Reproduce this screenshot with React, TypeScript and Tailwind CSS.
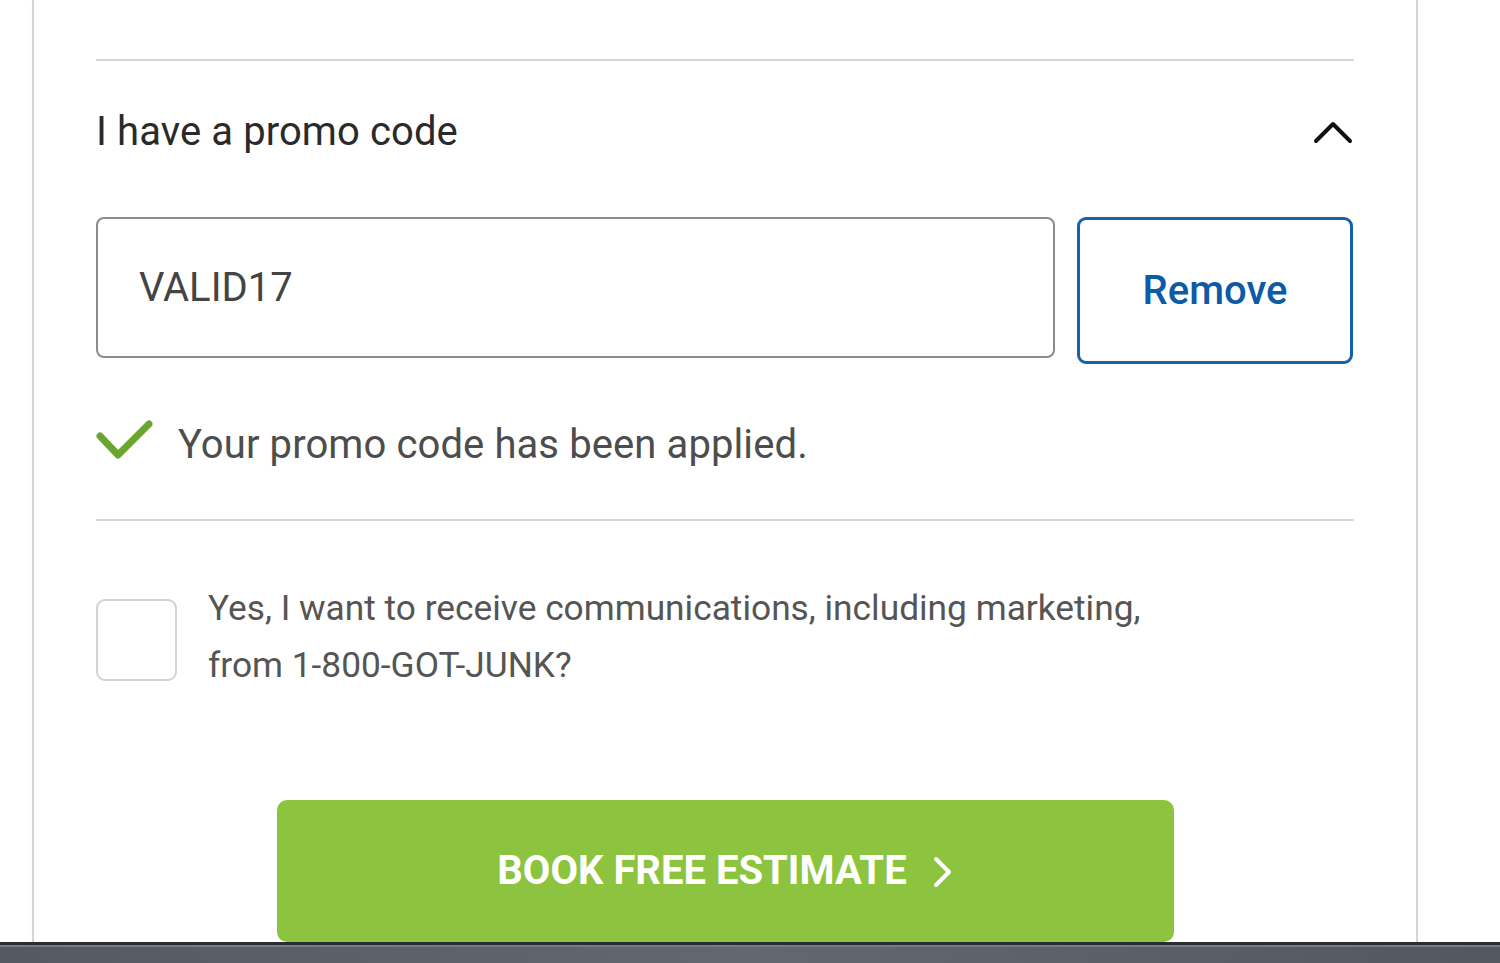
import React from "react";

export default function App() {
  return (
    <div
      className="w-[1500px] h-[963px] bg-white flex flex-col overflow-hidden"
      style={{ fontFamily: "Roboto, 'Liberation Sans', sans-serif" }}
    >
      <div className="flex-1 flex min-h-0">
        <div className="w-[32px] shrink-0 bg-white" />
        <div className="w-[1386px] shrink-0 border-x-2 border-[#d4d4d4] bg-white px-[62px] pt-[59px] shadow-[3px_0_8px_rgba(0,0,0,0.05)] overflow-hidden">
          <div className="border-t-2 border-[#d6d6d6]" />
          <div className="h-[142px] flex items-center justify-between">
            <span className="text-[40px] leading-none text-[#2a2a2a] tracking-[0.1px]">I have a promo code</span>
            <svg width="40" height="24" viewBox="0 0 40 24" className="mr-[1px]" fill="none">
              <path d="M3 21 L20 4 L37 21" stroke="#111" strokeWidth="4" strokeLinecap="round" strokeLinejoin="round" />
            </svg>
          </div>
          <div className="mt-[14px] flex items-start gap-[22px]">
            <div className="w-[959px] h-[141px] rounded-[8px] border-2 border-[#8c8c8c] flex items-center pl-[41px]">
              <span className="text-[40px] leading-none text-[#444444]">VALID17</span>
            </div>
            <button className="w-[276px] h-[147px] rounded-[9px] border-[3px] border-[#1760ad] flex items-center justify-center bg-white">
              <span className="text-[40px] leading-none font-medium text-[#0d5aa7]">Remove</span>
            </button>
          </div>
          <div className="mt-[51px] h-[60px] flex items-center">
            <svg width="58" height="46" viewBox="0 0 58 46" className="shrink-0 -mt-[8px]" fill="none">
              <path d="M4 18 L22 37 L53 6" stroke="#6aa530" strokeWidth="7" strokeLinecap="round" strokeLinejoin="round" />
            </svg>
            <span className="ml-[24px] text-[40px] leading-none text-[#4d4d4d] tracking-[0.1px]">Your promo code has been applied.</span>
          </div>
          <div className="mt-[44px] border-t-2 border-[#d6d6d6]" />
          <div className="mt-[59px] flex items-start">
            <div className="mt-[19px] w-[81px] h-[82px] shrink-0 rounded-[9px] border-2 border-[#d2d2d2] bg-white" />
            <p className="ml-[31px] text-[35.3px] leading-[57px] text-[#555555]">
              Yes, I want to receive communications, including marketing,
              <br />
              from 1-800-GOT-JUNK?
            </p>
          </div>
          <div className="mt-[106px] flex justify-center">
            <button className="w-[897px] h-[142px] rounded-[10px] bg-[#8dc43f] flex items-center justify-center">
              <span className="text-[40px] leading-none font-bold text-white">BOOK FREE ESTIMATE</span>
              <svg width="22" height="32" viewBox="0 0 22 32" className="ml-[24px] mt-[2px]" fill="none">
                <path d="M5 3 L18 16 L5 29" stroke="#fff" strokeWidth="4" strokeLinecap="round" strokeLinejoin="round" />
              </svg>
            </button>
          </div>
        </div>
        <div className="flex-1 bg-white" />
      </div>
      <div className="h-[21px] shrink-0 border-t-[3px] border-[#2a2d31] bg-gradient-to-r from-[#545a61] via-[#626870] to-[#525860]">
        <div className="h-[2px] bg-[#767c84]" />
      </div>
    </div>
  );
}
